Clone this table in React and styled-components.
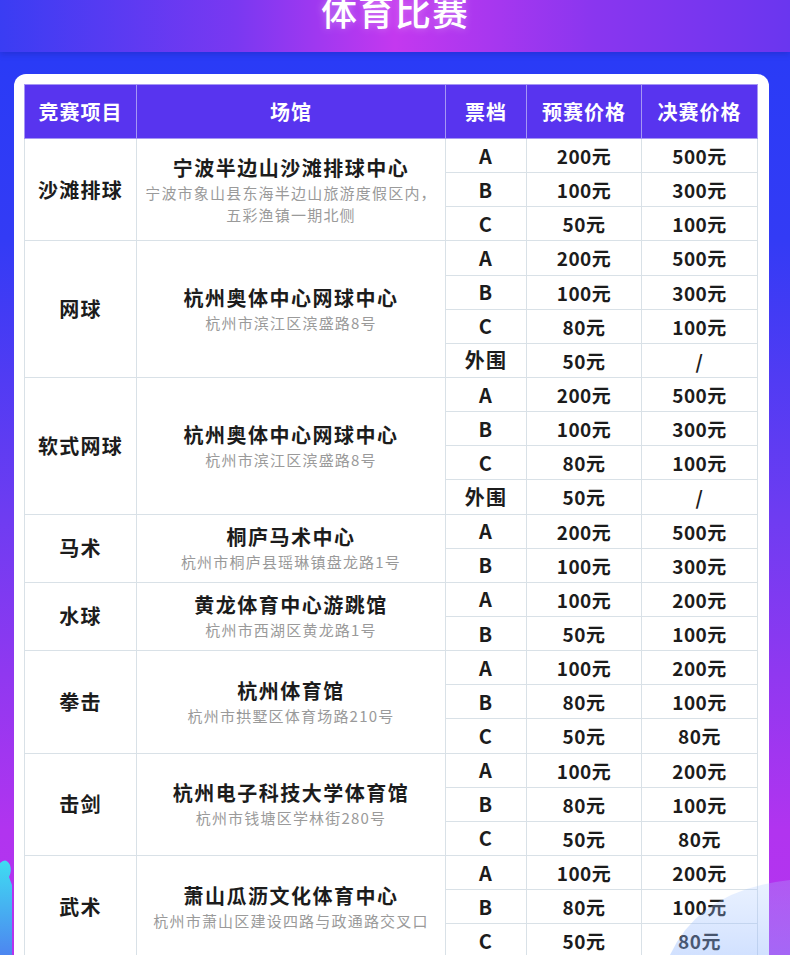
import React from 'react';
import styled, { createGlobalStyle } from 'styled-components';

const GlobalStyle = createGlobalStyle`
  html, body {
    margin: 0;
    padding: 0;
    width: 790px;
    height: 955px;
    overflow: hidden;
  }
  body {
    font-family: 'Noto Sans CJK SC', 'Noto Sans', sans-serif;
  }
`;

const Page = styled.div`
  position: relative;
  width: 790px;
  height: 955px;
  overflow: hidden;
  background: linear-gradient(
    180deg,
    #2a3bf6 60px,
    #333bf5 240px,
    #6f3cf1 520px,
    #b134ef 830px,
    #b533ef 100%
  );
`;

const Banner = styled.div`
  height: 52px;
  display: flex;
  justify-content: center;
  background: linear-gradient(90deg, #3a3df3 0%, #7a38f1 30%, #c438ef 50%, #8a36ef 75%, #6a36ef 100%);
  box-shadow: 0 2px 6px rgba(20, 20, 120, 0.25);
`;

const Title = styled.h1`
  margin: -8px 0 0;
  font-size: 36px;
  line-height: 36px;
  font-weight: 500;
  color: #fff;
  letter-spacing: 1px;
  text-shadow: 0 0 8px rgba(255, 255, 255, 0.35);
`;

const Card = styled.div`
  margin: 22px 21px 0 14px;
  padding: 10px 12px 0 10px;
  background: #fff;
  border-radius: 12px 12px 0 0;
`;

const Table = styled.table`
  width: 733px;
  border-collapse: collapse;
  table-layout: fixed;
  text-align: center;
`;

const Th = styled.th`
  height: 53px;
  padding: 0;
  background: #5834ef;
  color: #fff;
  font-size: 20px;
  font-weight: 700;
  letter-spacing: 1px;
  border: 1px solid #a596f4;
`;

const Td = styled.td`
  height: 33.15px;
  padding: 0;
  border: 1px solid #d9e1e7;
  color: #1c1c1c;
  font-size: ${(p) => (p.$price ? '19px' : '20px')};
  font-weight: 700;
  letter-spacing: ${(p) => (p.$price ? '0.5px' : '1.3px')};
  line-height: 1;
  vertical-align: middle;
`;

const VenueName = styled.div`
  font-size: 20px;
  line-height: 28px;
  font-weight: 700;
  letter-spacing: 1.5px;
  color: #1c1c1c;
`;

const Address = styled.div`
  font-size: 15px;
  line-height: 22px;
  font-weight: 400;
  letter-spacing: 1.2px;
  color: #9a9a9a;
`;

const DecoLeft = styled.svg`
  position: absolute;
  left: 0;
  bottom: 0;
  pointer-events: none;
`;

const DecoRight = styled.svg`
  position: absolute;
  right: 0;
  bottom: 0;
  pointer-events: none;
`;

const events = [
  {
    name: '沙滩排球',
    venue: '宁波半边山沙滩排球中心',
    address: ['宁波市象山县东海半边山旅游度假区内，', '五彩渔镇一期北侧'],
    tiers: [
      ['A', '200元', '500元'],
      ['B', '100元', '300元'],
      ['C', '50元', '100元'],
    ],
  },
  {
    name: '网球',
    venue: '杭州奥体中心网球中心',
    address: ['杭州市滨江区滨盛路8号'],
    tiers: [
      ['A', '200元', '500元'],
      ['B', '100元', '300元'],
      ['C', '80元', '100元'],
      ['外围', '50元', '/'],
    ],
  },
  {
    name: '软式网球',
    venue: '杭州奥体中心网球中心',
    address: ['杭州市滨江区滨盛路8号'],
    tiers: [
      ['A', '200元', '500元'],
      ['B', '100元', '300元'],
      ['C', '80元', '100元'],
      ['外围', '50元', '/'],
    ],
  },
  {
    name: '马术',
    venue: '桐庐马术中心',
    address: ['杭州市桐庐县瑶琳镇盘龙路1号'],
    tiers: [
      ['A', '200元', '500元'],
      ['B', '100元', '300元'],
    ],
  },
  {
    name: '水球',
    venue: '黄龙体育中心游跳馆',
    address: ['杭州市西湖区黄龙路1号'],
    tiers: [
      ['A', '100元', '200元'],
      ['B', '50元', '100元'],
    ],
  },
  {
    name: '拳击',
    venue: '杭州体育馆',
    address: ['杭州市拱墅区体育场路210号'],
    tiers: [
      ['A', '100元', '200元'],
      ['B', '80元', '100元'],
      ['C', '50元', '80元'],
    ],
  },
  {
    name: '击剑',
    venue: '杭州电子科技大学体育馆',
    address: ['杭州市钱塘区学林街280号'],
    tiers: [
      ['A', '100元', '200元'],
      ['B', '80元', '100元'],
      ['C', '50元', '80元'],
    ],
  },
  {
    name: '武术',
    venue: '萧山瓜沥文化体育中心',
    address: ['杭州市萧山区建设四路与政通路交叉口'],
    tiers: [
      ['A', '100元', '200元'],
      ['B', '80元', '100元'],
      ['C', '50元', '80元'],
    ],
  },
];

const EventRows = ({ event }) =>
  event.tiers.map(([tier, pre, fin], i) => (
    <tr key={tier}>
      {i === 0 && (
        <>
          <Td rowSpan={event.tiers.length}>{event.name}</Td>
          <Td rowSpan={event.tiers.length}>
            <VenueName>{event.venue}</VenueName>
            {event.address.map((line) => (
              <Address key={line}>{line}</Address>
            ))}
          </Td>
        </>
      )}
      <Td>{tier}</Td>
      <Td $price>{pre}</Td>
      <Td $price>{fin}</Td>
    </tr>
  ));

const App = () => {
  return (
    <Page>
      <GlobalStyle />
      <Banner>
        <Title>体育比赛</Title>
      </Banner>
      <Card>
        <Table>
          <colgroup>
            <col style={{ width: 112 }} />
            <col style={{ width: 309 }} />
            <col style={{ width: 81 }} />
            <col style={{ width: 115 }} />
            <col style={{ width: 116 }} />
          </colgroup>
          <thead>
            <tr>
              <Th>竞赛项目</Th>
              <Th>场馆</Th>
              <Th>票档</Th>
              <Th>预赛价格</Th>
              <Th>决赛价格</Th>
            </tr>
          </thead>
          <tbody>
            {events.map((ev) => (
              <EventRows key={ev.name} event={ev} />
            ))}
          </tbody>
        </Table>
      </Card>
      {/* bottom decorations */}
      <DecoLeft width="20" height="100" viewBox="0 0 20 100">
        <defs>
          <linearGradient id="cy" x1="0" y1="0" x2="0" y2="1">
            <stop offset="0" stopColor="#3fdcf2" />
            <stop offset="1" stopColor="#4d86f0" />
          </linearGradient>
        </defs>
        <path d="M0 8 Q6 2 10 10 Q12 16 9 22 L12 30 L12 100 L0 100 Z" fill="url(#cy)" />
      </DecoLeft>
      <DecoRight width="130" height="85" viewBox="0 0 130 85">
        <defs>
          <linearGradient id="lb" x1="0" y1="0" x2="0" y2="1">
            <stop offset="0" stopColor="#a9c8ff" stopOpacity="0.25" />
            <stop offset="1" stopColor="#8db4ff" stopOpacity="0.4" />
          </linearGradient>
        </defs>
        <path d="M10 85 Q40 20 130 10 L130 85 Z" fill="url(#lb)" />
      </DecoRight>
    </Page>
  );
};

export default App;
